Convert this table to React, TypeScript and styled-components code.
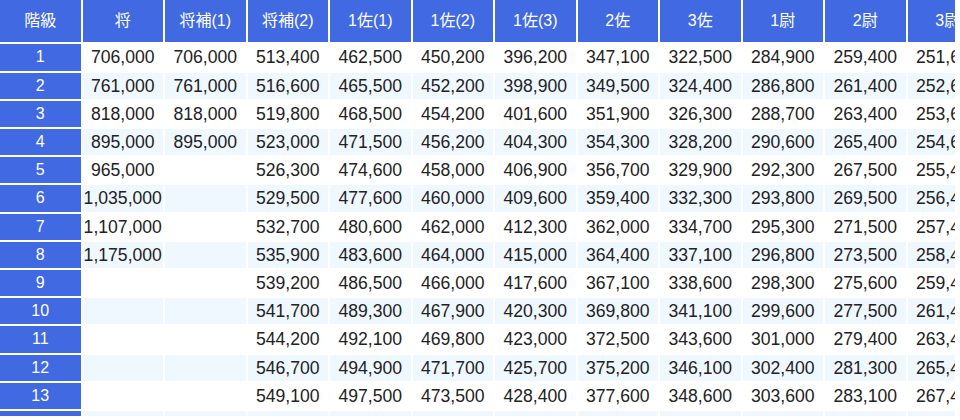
import React from "react";
import styled, { createGlobalStyle } from "styled-components";

const GlobalStyle = createGlobalStyle`
  html, body {
    margin: 0;
    padding: 0;
    background: #ffffff;
  }
  body {
    font-family: "Liberation Sans", Arial, "Noto Sans CJK JP", sans-serif;
  }
`;

const Viewport = styled.div`
  width: 955px;
  height: 416px;
  overflow: hidden;
  background: #ffffff;
`;

const Table = styled.table`
  border-collapse: separate;
  border-spacing: 2px;
  table-layout: fixed;
  width: 992px;
  margin: -2px 0 0 -2px;
`;

const HeadCell = styled.th`
  background: #4169e1;
  color: #ffffff;
  font-weight: normal;
  font-size: 16px;
  line-height: 18.4px;
  padding: 12px 4px;
  text-align: center;
  white-space: nowrap;
  overflow: hidden;
  font-family: "Liberation Sans", Arial, "Noto Sans CJK JP", sans-serif;
`;

const RankCell = styled.th`
  background: #4169e1;
  color: #ffffff;
  font-weight: normal;
  font-size: 16px;
  line-height: 18.4px;
  padding: 3px 4px;
  text-align: center;
`;

const Row = styled.tr<{ $alt: boolean }>`
  background: ${(p) => (p.$alt ? "#f0f8ff" : "#ffffff")};
`;

const Cell = styled.td`
  color: #222222;
  font-size: 17.6px;
  line-height: 20.2px;
  padding: 3px 0;
  text-align: center;
  white-space: nowrap;
  overflow: hidden;
`;

const headers = [
  "階級",
  "将",
  "将補(1)",
  "将補(2)",
  "1佐(1)",
  "1佐(2)",
  "1佐(3)",
  "2佐",
  "3佐",
  "1尉",
  "2尉",
  "3尉",
];

const rows: string[][] = [
  ["706,000", "706,000", "513,400", "462,500", "450,200", "396,200", "347,100", "322,500", "284,900", "259,400", "251,600"],
  ["761,000", "761,000", "516,600", "465,500", "452,200", "398,900", "349,500", "324,400", "286,800", "261,400", "252,600"],
  ["818,000", "818,000", "519,800", "468,500", "454,200", "401,600", "351,900", "326,300", "288,700", "263,400", "253,600"],
  ["895,000", "895,000", "523,000", "471,500", "456,200", "404,300", "354,300", "328,200", "290,600", "265,400", "254,600"],
  ["965,000", "", "526,300", "474,600", "458,000", "406,900", "356,700", "329,900", "292,300", "267,500", "255,400"],
  ["1,035,000", "", "529,500", "477,600", "460,000", "409,600", "359,400", "332,300", "293,800", "269,500", "256,400"],
  ["1,107,000", "", "532,700", "480,600", "462,000", "412,300", "362,000", "334,700", "295,300", "271,500", "257,400"],
  ["1,175,000", "", "535,900", "483,600", "464,000", "415,000", "364,400", "337,100", "296,800", "273,500", "258,400"],
  ["", "", "539,200", "486,500", "466,000", "417,600", "367,100", "338,600", "298,300", "275,600", "259,400"],
  ["", "", "541,700", "489,300", "467,900", "420,300", "369,800", "341,100", "299,600", "277,500", "261,400"],
  ["", "", "544,200", "492,100", "469,800", "423,000", "372,500", "343,600", "301,000", "279,400", "263,400"],
  ["", "", "546,700", "494,900", "471,700", "425,700", "375,200", "346,100", "302,400", "281,300", "265,400"],
  ["", "", "549,100", "497,500", "473,500", "428,400", "377,600", "348,600", "303,600", "283,100", "267,400"],
  ["", "", "551,600", "500,100", "475,500", "430,700", "380,100", "351,000", "305,000", "284,500", "269,400"],
  ["", "", "554,000", "502,600", "477,300", "433,000", "382,600", "353,400", "306,400", "286,000", "271,400"],
];

export default function App() {
  return (
    <>
      <GlobalStyle />
      <Viewport>
        <Table>
          <thead>
            <tr>
              {headers.map((h) => (
                <HeadCell key={h}>{h}</HeadCell>
              ))}
            </tr>
          </thead>
          <tbody>
            {rows.map((r, i) => (
              <Row key={i} $alt={i % 2 === 1}>
                <RankCell>{i + 1}</RankCell>
                {r.map((v, j) => (
                  <Cell key={j}>{v}</Cell>
                ))}
              </Row>
            ))}
          </tbody>
        </Table>
      </Viewport>
    </>
  );
}
